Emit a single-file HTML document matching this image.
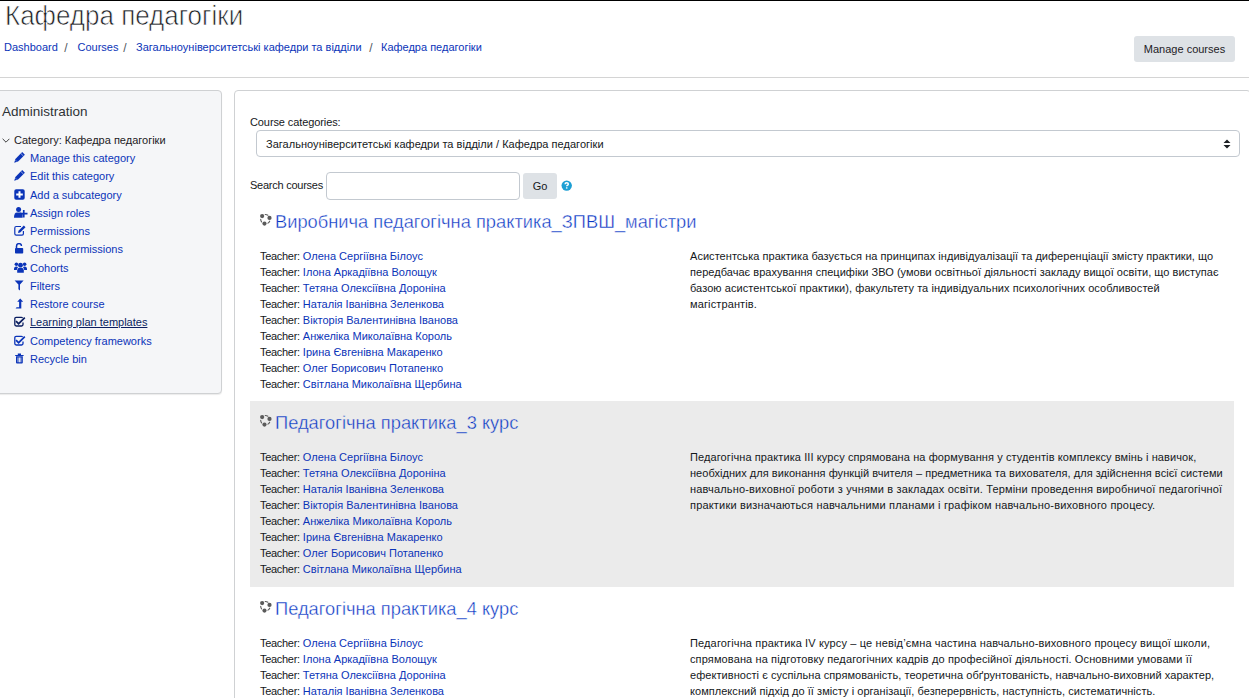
<!DOCTYPE html>
<html><head><meta charset="utf-8">
<style>
*{box-sizing:border-box}
html,body{margin:0;padding:0}
body{width:1249px;height:698px;overflow:hidden;position:relative;background:#fff;font-family:"Liberation Sans",sans-serif;color:#15181b}
.a{position:absolute;white-space:nowrap}
a,.lk{color:#0b34b8;text-decoration:none}
.tl{letter-spacing:-0.3px}
#topline{position:absolute;left:0;top:0;width:1249px;height:1px;background:#000}
h1{position:absolute;margin:0;left:4.6px;top:0px;font-size:28px;font-weight:normal;line-height:32px;color:#1d2125;-webkit-text-stroke:0.7px #fff;white-space:nowrap;transform:scaleX(0.928);transform-origin:0 0}
.bc{position:absolute;top:40px;font-size:11px;line-height:14px;white-space:nowrap}
.sep{color:#505860}
#mc{position:absolute;left:1134px;top:36px;width:101px;height:26px;background:#dee2e6;border-radius:3px;font-size:11px;line-height:26px;text-align:center;color:#1d2125}
#hr{position:absolute;left:0;top:77px;width:1249px;height:1px;background:#d4d4d4}
#side{position:absolute;left:-10px;top:90px;width:232px;height:304px;background:#f5f6f8;border:1px solid #cfd1d3;border-radius:4px;box-shadow:0 1px 1px rgba(0,0,0,.08)}
#main{position:absolute;left:234px;top:90px;width:1017px;height:700px;background:#fff;border:1px solid #cfd1d3;border-radius:4px}
#adm{position:absolute;left:2px;top:104px;font-size:13.5px;line-height:16px;white-space:nowrap;color:#2e3236}
#chev{position:absolute;left:2px;top:138px;line-height:0}
#cat{position:absolute;left:14px;top:133px;font-size:11px;line-height:14px;white-space:nowrap;color:#1d2125}
.si{position:absolute;left:0;height:14px;font-size:11px;line-height:14px;white-space:nowrap;color:#0b34b8}
.si .ic{position:absolute;left:14px;top:1px;line-height:0}
.si .tx{position:absolute;left:30px;top:0}
.si.hov{color:#0a1e60}
.si.hov .tx{text-decoration:underline}
#cclab{position:absolute;left:250px;top:115px;font-size:11px;line-height:14px;white-space:nowrap;letter-spacing:-0.1px}
#sel{position:absolute;left:256px;top:130px;width:984px;height:27px;border:1px solid #c3c9d0;border-radius:4px;font-size:11px;line-height:26px;padding-left:9px;white-space:nowrap;letter-spacing:0.03px}
#selarr{position:absolute;right:8px;top:8px}
#sclab{position:absolute;left:250px;top:178px;font-size:11px;line-height:14px;white-space:nowrap;letter-spacing:-0.25px}
#inp{position:absolute;left:326px;top:172px;width:194px;height:28px;border:1px solid #c3c9d0;border-radius:4px;background:#fff}
#go{position:absolute;left:523px;top:173px;width:34px;height:26px;background:#dee2e6;border-radius:3px;font-size:11px;line-height:26px;text-align:center}
#help{position:absolute;left:561px;top:180px;line-height:0}
.cbg{position:absolute;left:250px;width:984px;background:#ebebeb}
.ct{position:absolute;left:275.3px;font-size:19.1px;line-height:24px;white-space:nowrap;color:#0a36c4;-webkit-text-stroke:0.4px #fff;transform:scaleX(0.958);transform-origin:0 0}
.cbg + div + .ct{-webkit-text-stroke-color:#ebebeb}
.tch{position:absolute;left:260px;font-size:11px;line-height:16px;white-space:nowrap}
.desc{position:absolute;left:690px;font-size:11px;line-height:16px;white-space:nowrap}

</style></head><body>
<div id="topline"></div>
<h1>Кафедра педагогіки</h1>
<div class="bc" style="left:4px"><a>Dashboard</a></div>
<div class="bc sep" style="left:64.3px;font-size:12px;top:41px">/</div>
<div class="bc" style="left:77.5px"><a>Courses</a></div>
<div class="bc sep" style="left:123.3px;font-size:12px;top:41px">/</div>
<div class="bc" style="left:136px"><a>Загальноуніверситетські кафедри та відділи</a></div>
<div class="bc sep" style="left:369.3px;font-size:12px;top:41px">/</div>
<div class="bc" style="left:381px"><a>Кафедра педагогіки</a></div>
<div id="mc">Manage courses</div>
<div id="hr"></div>
<div id="side"></div>
<div id="adm">Administration</div>
<div id="chev"><svg viewBox="0 0 8 5" width="8" height="5"><path d="M0.6 0.8 L4 4.2 L7.4 0.8" stroke="#2a2a2a" stroke-width="0.9" fill="none"/></svg></div>
<div id="cat">Category: Кафедра педагогіки</div>
<div class="si" style="top:151px"><span class="ic"><svg viewBox="0 0 11 11" width="11" height="11"><path fill="currentColor" d="M8.2 0.1 L10.9 2.8 L4.1 9.6 L0.2 10.8 L1.4 6.9 Z"/><path d="M6.9 1.5 L9.5 4.1" stroke="#f5f6f8" stroke-width="0.6"/><path d="M1.5 8.2 L2.8 9.5" stroke="#f5f6f8" stroke-width="0.5"/></svg></span><span class="tx">Manage this category</span></div>
<div class="si" style="top:169px"><span class="ic"><svg viewBox="0 0 11 11" width="11" height="11"><path fill="currentColor" d="M8.2 0.1 L10.9 2.8 L4.1 9.6 L0.2 10.8 L1.4 6.9 Z"/><path d="M6.9 1.5 L9.5 4.1" stroke="#f5f6f8" stroke-width="0.6"/><path d="M1.5 8.2 L2.8 9.5" stroke="#f5f6f8" stroke-width="0.5"/></svg></span><span class="tx">Edit this category</span></div>
<div class="si" style="top:188px"><span class="ic"><svg viewBox="0 0 11 11" width="11" height="11"><rect x="0.3" y="0.3" width="10.4" height="10.4" rx="1.8" fill="currentColor"/><path d="M4.5 2.2h2v2.3h2.3v2h-2.3v2.3h-2v-2.3h-2.3v-2h2.3z" fill="#fff"/></svg></span><span class="tx">Add a subcategory</span></div>
<div class="si" style="top:206px"><span class="ic"><svg viewBox="0 0 14 11" width="14" height="11"><circle cx="4.6" cy="2.6" r="2.5" fill="currentColor"/><path d="M0 10.8 Q0 5.4 3 5.4 L6.4 5.4 Q8.2 5.4 8.6 7 L8.6 10.8 Z" fill="currentColor"/><path d="M8.9 3h1.7v2.8h2.9v1.7h-2.9v2.9h-1.7v-2.9h-2.9v-1.7h2.9z" fill="currentColor"/></svg></span><span class="tx">Assign roles</span></div>
<div class="si" style="top:224px"><span class="ic"><svg viewBox="0 0 12 11" width="12" height="11"><path d="M7 1.5 H2.2 Q0.8 1.5 0.8 2.9 V8.8 Q0.8 10.2 2.2 10.2 H8 Q9.4 10.2 9.4 8.8 V6" stroke="currentColor" stroke-width="1.2" fill="none"/><path d="M9.8 0.5 L11.5 2.2 L6.2 7.5 L4 8 L4.5 5.8 Z" fill="currentColor"/></svg></span><span class="tx">Permissions</span></div>
<div class="si" style="top:242px"><span class="ic"><svg viewBox="0 0 11 11" width="11" height="11"><path d="M2.5 5 V3.2 Q2.5 0.6 5 0.6 Q7.5 0.6 7.5 3" stroke="currentColor" stroke-width="1.5" fill="none"/><rect x="1" y="5" width="8.2" height="5.6" rx="0.8" fill="currentColor"/></svg></span><span class="tx">Check permissions</span></div>
<div class="si" style="top:261px"><span class="ic"><svg viewBox="0 0 13 11" width="13" height="11"><circle cx="2.4" cy="2.2" r="1.8" fill="currentColor"/><circle cx="10.6" cy="2.2" r="1.8" fill="currentColor"/><circle cx="6.5" cy="3.2" r="2.4" fill="currentColor"/><path d="M0 7.2 Q0 4.6 2.4 4.6 Q3.6 4.6 4 5.4 Q2.8 6.2 2.8 8 L0 8 Z" fill="currentColor"/><path d="M13 7.2 Q13 4.6 10.6 4.6 Q9.4 4.6 9 5.4 Q10.2 6.2 10.2 8 L13 8 Z" fill="currentColor"/><path d="M3.2 10.8 L3.2 8.4 Q3.2 5.8 5.2 5.8 L7.8 5.8 Q9.8 5.8 9.8 8.4 L9.8 10.8 Z" fill="currentColor"/></svg></span><span class="tx">Cohorts</span></div>
<div class="si" style="top:279px"><span class="ic"><svg viewBox="0 0 11 11" width="11" height="11"><path d="M0.6 0.6 H9.6 L6 4.6 V10.6 L4.4 9.2 V4.6 Z" fill="currentColor"/></svg></span><span class="tx">Filters</span></div>
<div class="si" style="top:297px"><span class="ic"><svg viewBox="0 0 11 11" width="11" height="11"><path d="M6.2 0.4 L9.2 3.8 H7.3 V10.6 H1.6 L2.6 9.2 H5.1 V3.8 H3.2 Z" fill="currentColor"/></svg></span><span class="tx">Restore course</span></div>
<div class="si hov" style="top:315px"><span class="ic"><svg viewBox="0 0 12 11" width="12" height="11"><path d="M8.6 2 Q8.2 1.4 7.4 1.4 H2.2 Q0.8 1.4 0.8 2.8 V8.6 Q0.8 10 2.2 10 H7.6 Q9 10 9 8.6 V6.4" stroke="currentColor" stroke-width="1.3" fill="none"/><path d="M2.6 4.6 L4.6 6.6 L10.2 1 L11.4 2.2 L4.6 9 L1.4 5.8 Z" fill="currentColor"/></svg></span><span class="tx">Learning plan templates</span></div>
<div class="si" style="top:334px"><span class="ic"><svg viewBox="0 0 12 11" width="12" height="11"><path d="M8.6 2 Q8.2 1.4 7.4 1.4 H2.2 Q0.8 1.4 0.8 2.8 V8.6 Q0.8 10 2.2 10 H7.6 Q9 10 9 8.6 V6.4" stroke="currentColor" stroke-width="1.3" fill="none"/><path d="M2.6 4.6 L4.6 6.6 L10.2 1 L11.4 2.2 L4.6 9 L1.4 5.8 Z" fill="currentColor"/></svg></span><span class="tx">Competency frameworks</span></div>
<div class="si" style="top:352px"><span class="ic"><svg viewBox="0 0 11 11" width="11" height="11"><path d="M1.2 2 H9.6 V3 H1.2 Z M3.8 0.5 H7 V2 H3.8 Z" fill="currentColor"/><path d="M2 3.2 H8.8 V9.6 Q8.8 10.6 7.8 10.6 H3 Q2 10.6 2 9.6 Z" fill="currentColor"/><path d="M3.6 4.4 h0.9 v4.8 h-0.9z M5 4.4 h0.9 v4.8 h-0.9z M6.4 4.4 h0.9 v4.8 h-0.9z" fill="#f5f6f8"/></svg></span><span class="tx">Recycle bin</span></div>
<div id="main"></div>
<div id="cclab">Course categories:</div>
<div id="sel"><span>Загальноуніверситетські кафедри та відділи / Кафедра педагогіки</span><svg id="selarr" viewBox="0 0 8 10" width="8" height="10"><path d="M4 0.5 L7.5 4 H0.5 Z M4 9.5 L7.5 6 H0.5 Z" fill="#1d2125"/></svg></div>
<div id="sclab">Search courses</div>
<div id="inp"></div>
<div id="go">Go</div>
<div id="help"><svg viewBox="0 0 11 11" width="11" height="11"><circle cx="5.7" cy="5.6" r="5.2" fill="#1c9fd4"/><path d="M4.1 4.2 Q4.1 2.7 5.7 2.7 Q7.3 2.7 7.3 4 Q7.3 4.9 6.3 5.4 Q5.7 5.7 5.7 6.3" stroke="#fff" stroke-width="1.5" fill="none"/><rect x="4.95" y="7.3" width="1.5" height="1.3" fill="#fff"/></svg></div>
<div class="a" style="left:257px;top:211px;line-height:0"><svg viewBox="0 0 18 18" width="18" height="18"><circle cx="5.16" cy="5.03" r="2.1" fill="#5a5a5a"/><circle cx="12.5" cy="6.96" r="2.1" fill="#5a5a5a"/><circle cx="7.48" cy="12.6" r="2.1" fill="#5a5a5a"/><path d="M8.24 3.50 A4.7 4.7 0 0 1 10.89 4.21 M12.66 10.19 A4.7 4.7 0 0 1 10.96 12.14 M4.55 10.90 A4.7 4.7 0 0 1 3.70 8.28" stroke="#5a5a5a" stroke-width="1.1" fill="none" stroke-linecap="round"/></svg></div>
<div class="ct" style="top:210px">Виробнича педагогічна практика_ЗПВШ_магістри</div>
<div class="tch" style="top:248px"><span class="tl">Teacher:</span> <span class="lk">Олена Сергіївна Білоус</span><br><span class="tl">Teacher:</span> <span class="lk">Ілона Аркадіївна Волощук</span><br><span class="tl">Teacher:</span> <span class="lk">Тетяна Олексіївна Дороніна</span><br><span class="tl">Teacher:</span> <span class="lk">Наталія Іванівна Зеленкова</span><br><span class="tl">Teacher:</span> <span class="lk">Вікторія Валентинівна Іванова</span><br><span class="tl">Teacher:</span> <span class="lk">Анжеліка Миколаївна Король</span><br><span class="tl">Teacher:</span> <span class="lk">Ірина Євгенівна Макаренко</span><br><span class="tl">Teacher:</span> <span class="lk">Олег Борисович Потапенко</span><br><span class="tl">Teacher:</span> <span class="lk">Світлана Миколаївна Щербина</span></div>
<div class="desc" style="top:248px"><span style="letter-spacing:0.041px">Асистентська практика базується на принципах індивідуалізації та диференціації змісту практики, що</span><br><span style="letter-spacing:0.031px">передбачає врахування специфіки ЗВО (умови освітньої діяльності закладу вищої освіти, що виступає</span><br><span style="letter-spacing:0.071px">базою асистентської практики), факультету та індивідуальних психологічних особливостей</span><br><span style="letter-spacing:0.125px">магістрантів.</span></div>
<div class="cbg" style="top:401px;height:186px"></div>
<div class="a" style="left:257px;top:412px;line-height:0"><svg viewBox="0 0 18 18" width="18" height="18"><circle cx="5.16" cy="5.03" r="2.1" fill="#5a5a5a"/><circle cx="12.5" cy="6.96" r="2.1" fill="#5a5a5a"/><circle cx="7.48" cy="12.6" r="2.1" fill="#5a5a5a"/><path d="M8.24 3.50 A4.7 4.7 0 0 1 10.89 4.21 M12.66 10.19 A4.7 4.7 0 0 1 10.96 12.14 M4.55 10.90 A4.7 4.7 0 0 1 3.70 8.28" stroke="#5a5a5a" stroke-width="1.1" fill="none" stroke-linecap="round"/></svg></div>
<div class="ct" style="top:411px">Педагогічна практика_3 курс</div>
<div class="tch" style="top:449px"><span class="tl">Teacher:</span> <span class="lk">Олена Сергіївна Білоус</span><br><span class="tl">Teacher:</span> <span class="lk">Тетяна Олексіївна Дороніна</span><br><span class="tl">Teacher:</span> <span class="lk">Наталія Іванівна Зеленкова</span><br><span class="tl">Teacher:</span> <span class="lk">Вікторія Валентинівна Іванова</span><br><span class="tl">Teacher:</span> <span class="lk">Анжеліка Миколаївна Король</span><br><span class="tl">Teacher:</span> <span class="lk">Ірина Євгенівна Макаренко</span><br><span class="tl">Teacher:</span> <span class="lk">Олег Борисович Потапенко</span><br><span class="tl">Teacher:</span> <span class="lk">Світлана Миколаївна Щербина</span></div>
<div class="desc" style="top:449px"><span style="letter-spacing:0.097px">Педагогічна практика III курсу спрямована на формування у студентів комплексу вмінь і навичок,</span><br><span style="letter-spacing:0.041px">необхідних для виконання функцій вчителя – предметника та вихователя, для здійснення всієї системи</span><br><span style="letter-spacing:0.158px">навчально-виховної роботи з учнями в закладах освіти. Терміни проведення виробничої педагогічної</span><br><span style="letter-spacing:0.181px">практики визначаються навчальними планами і графіком навчально-виховного процесу.</span></div>
<div class="a" style="left:257px;top:598px;line-height:0"><svg viewBox="0 0 18 18" width="18" height="18"><circle cx="5.16" cy="5.03" r="2.1" fill="#5a5a5a"/><circle cx="12.5" cy="6.96" r="2.1" fill="#5a5a5a"/><circle cx="7.48" cy="12.6" r="2.1" fill="#5a5a5a"/><path d="M8.24 3.50 A4.7 4.7 0 0 1 10.89 4.21 M12.66 10.19 A4.7 4.7 0 0 1 10.96 12.14 M4.55 10.90 A4.7 4.7 0 0 1 3.70 8.28" stroke="#5a5a5a" stroke-width="1.1" fill="none" stroke-linecap="round"/></svg></div>
<div class="ct" style="top:597px">Педагогічна практика_4 курс</div>
<div class="tch" style="top:635px"><span class="tl">Teacher:</span> <span class="lk">Олена Сергіївна Білоус</span><br><span class="tl">Teacher:</span> <span class="lk">Ілона Аркадіївна Волощук</span><br><span class="tl">Teacher:</span> <span class="lk">Тетяна Олексіївна Дороніна</span><br><span class="tl">Teacher:</span> <span class="lk">Наталія Іванівна Зеленкова</span><br><span class="tl">Teacher:</span> <span class="lk">Вікторія Валентинівна Іванова</span></div>
<div class="desc" style="top:635px"><span style="letter-spacing:0.140px">Педагогічна практика IV курсу – це невід’ємна частина навчально-виховного процесу вищої школи,</span><br><span style="letter-spacing:0.121px">спрямована на підготовку педагогічних кадрів до професійної діяльності. Основними умовами її</span><br><span style="letter-spacing:0.058px">ефективності є суспільна спрямованість, теоретична обґрунтованість, навчально-виховний характер,</span><br><span style="letter-spacing:0.044px">комплексний підхід до її змісту і організації, безперервність, наступність, систематичність.</span></div>
</body></html>
